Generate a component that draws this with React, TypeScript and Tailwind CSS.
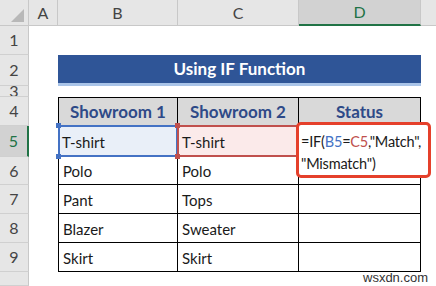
import React from "react";

const rows = [
  ["Polo", "Polo"],
  ["Pant", "Tops"],
  ["Blazer", "Sweater"],
  ["Skirt", "Skirt"],
];

const rowHeaders = [
  { n: "1", cls: "row-start-2" },
  { n: "2", cls: "row-start-3" },
  { n: "3", cls: "row-start-4" },
  { n: "4", cls: "row-start-5" },
  { n: "5", cls: "row-start-6" },
  { n: "6", cls: "row-start-7" },
  { n: "7", cls: "row-start-8" },
  { n: "8", cls: "row-start-9" },
  { n: "9", cls: "row-start-10" },
  { n: "", cls: "row-start-11" },
];

export default function App() {
  return (
    <div
      className="relative w-[436px] h-[286px] overflow-hidden bg-white grid grid-cols-[29px_29px_120px_121px_122px_15px] grid-rows-[26px_29px_31px_11px_29px_31px_28px_29px_29px_29px_14px] text-[#1a1a1a]"
      style={{ fontFamily: "Lato, 'Open Sans', sans-serif" }}
    >
      {/* column headers */}
      <div className="relative bg-[#e6e6e6] border-r border-b border-[#c8c8c8]">
        <div className="absolute right-[4px] bottom-[3px] w-0 h-0 border-l-[13px] border-l-transparent border-b-[13px] border-b-[#b8b8b8]" />
      </div>
      <div className="flex items-center justify-center bg-[#e6e6e6] border-r border-b border-[#c8c8c8] text-[16px] text-[#444]">A</div>
      <div className="flex items-center justify-center bg-[#e6e6e6] border-r border-b border-[#c8c8c8] text-[16px] text-[#444]">B</div>
      <div className="flex items-center justify-center bg-[#e6e6e6] border-r border-b border-[#c8c8c8] text-[16px] text-[#444]">C</div>
      <div className="flex items-center justify-center bg-[#d2d2d2] border-r border-[#c8c8c8] border-b-2 border-b-[#217346] text-[16px] text-[#217346]">D</div>
      <div className="bg-[#e6e6e6] border-b border-[#c8c8c8]" />

      {/* row headers */}
      {rowHeaders.map((r) => (
        <div
          key={r.cls}
          className={`col-start-1 ${r.cls} flex justify-center overflow-hidden border-b border-[#d0d0d0] text-[16px] ${
            r.n === "3" ? "items-start leading-[9px]" : "items-center leading-none"
          } ${
            r.n === "5"
              ? "bg-[#d2d2d2] border-r-2 border-r-[#217346] text-[#217346]"
              : "bg-[#e6e6e6] border-r border-r-[#c8c8c8] text-[#444]"
          }`}
        >
          {r.n}
        </div>
      ))}

      {/* title banner */}
      <div className="col-start-3 col-span-3 row-start-3 flex items-center justify-center bg-[#2f5597] border-b-[3px] border-b-[#a9c4e8] text-white font-bold text-[17px]">
        Using IF Function
      </div>

      {/* table */}
      <div className="col-start-3 col-span-3 row-start-5 row-span-6 grid grid-cols-[119px_121px_122px] grid-rows-[28px_31px_28px_29px_29px_29px] border-l border-t border-black text-[15px]">
        {["Showroom 1", "Showroom 2", "Status"].map((h) => (
          <div key={h} className="flex items-center justify-center bg-[#d9d9d9] border-r border-b border-black font-bold text-[17px] text-[#2e4a88]">
            {h}
          </div>
        ))}

        {/* row 5 */}
        <div className="relative flex items-center pl-[3px] pt-[2px] bg-[#e9eff8] border-r border-b border-black">
          T-shirt
          <div className="absolute -left-px -top-px -right-px -bottom-px border-2 border-[#4472c4]" />
          <div className="absolute -left-[3px] -top-[3px] w-[5px] h-[5px] bg-[#4472c4]" />
          <div className="absolute -left-[3px] -bottom-[3px] w-[5px] h-[5px] bg-[#4472c4]" />
        </div>
        <div className="relative flex items-center pl-[4px] pt-[2px] bg-[#fbeaea] border-r border-b border-black">
          T-shirt
          <div className="absolute -left-px -top-px -right-px -bottom-px border-2 border-[#c0504d]" />
          <div className="absolute -left-[3px] -top-[3px] w-[5px] h-[5px] bg-[#c0504d]" />
          <div className="absolute -left-[3px] -bottom-[3px] w-[5px] h-[5px] bg-[#c0504d]" />
        </div>
        <div className="relative border-r border-b border-black">
          <div className="absolute -left-[3px] -top-[4px] w-[135px] h-[56px] z-10 bg-white border-[3px] border-[#e5402b] rounded-[5px] pl-[2px] pt-[6px] leading-[22px] whitespace-nowrap text-[14.5px] tracking-[-0.2px]">
            <div>
              =IF(<span className="text-[#4472c4]">B5</span>=<span className="text-[#c0504d]">C5</span>,"Match",
            </div>
            <div>"Mismatch")</div>
          </div>
        </div>

        {rows.map((r, i) => (
          <React.Fragment key={i}>
            <div className="flex items-center pl-[4px] pt-[2px] border-r border-b border-black">{r[0]}</div>
            <div className="flex items-center pl-[4px] pt-[2px] border-r border-b border-black">{r[1]}</div>
            <div className="border-r border-b border-black" />
          </React.Fragment>
        ))}
      </div>

      {/* watermark */}
      <div
        className="absolute left-[363px] top-[268px] text-[13px] text-[#333]"
        style={{ fontFamily: "'Liberation Sans', Arial, sans-serif" }}
      >
        wsxdn.com
      </div>
    </div>
  );
}
